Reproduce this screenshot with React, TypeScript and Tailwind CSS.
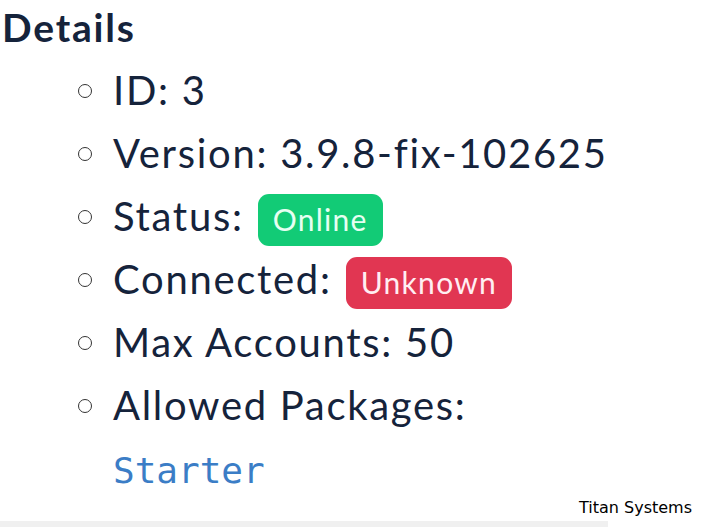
import React from 'react';

interface DetailRow {
  label: string;
  value?: string;
  badge?: { text: string; tone: 'green' | 'red' };
}

const rows: DetailRow[] = [
  { label: 'ID:', value: '3' },
  { label: 'Version:', value: '3.9.8-fix-102625' },
  { label: 'Status:', badge: { text: 'Online', tone: 'green' } },
  { label: 'Connected:', badge: { text: 'Unknown', tone: 'red' } },
  { label: 'Max Accounts:', value: '50' },
  { label: 'Allowed Packages:' },
];

const Badge: React.FC<{ text: string; tone: 'green' | 'red' }> = ({ text, tone }) => (
  <span
    className={`ml-[14px] mt-[8px] inline-flex h-[52px] items-center rounded-[11px] px-[15px] text-[30px] tracking-[1.3px] ${
      tone === 'green' ? 'bg-[#12cb76] text-[#e6fff2]' : 'bg-[#e13652] text-[#ffeef2]'
    }`}
  >
    {text}
  </span>
);

const App: React.FC = () => {
  return (
    <div className="flex h-[527px] w-[703px] flex-col bg-white text-[#15233b] [font-family:Lato,'Open_Sans',sans-serif]">
      <h2 className="h-[58px] pl-[2px] pt-[4px] text-[39px] leading-[46px] font-bold tracking-[1.8px]">Details</h2>

      <ul className="pl-[78px]">
        {rows.map((row) => (
          <li key={row.label} className="flex h-[63px] items-center">
            <span className="mr-[21px] mt-[2px] h-[14px] w-[14px] rounded-full border border-[#333]" />
            <span className="text-[40px] leading-none tracking-[1.7px]">
              {row.label}
              {row.value && <> {row.value}</>}
            </span>
            {row.badge && <Badge {...row.badge} />}
          </li>
        ))}
        <li className="flex h-[60px] items-center pl-[35px] pt-[10px]">
          <code className="text-[36px] text-[#3b7dc6] [font-family:'DejaVu_Sans_Mono',monospace]">Starter</code>
        </li>
      </ul>

      <div className="mt-auto pr-[11px] text-right text-[16px] leading-[20px] text-black [font-family:'DejaVu_Sans',Verdana,sans-serif]">
        Titan Systems
      </div>
      <div className="mt-[3px] h-[6px] w-[608px] bg-[#f0f0f0]" />
    </div>
  );
};

export default App;
